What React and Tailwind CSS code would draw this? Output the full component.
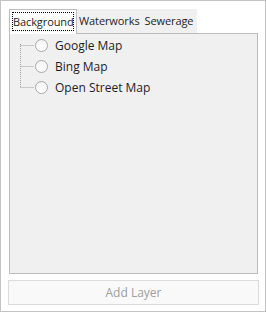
import React from 'react';

const layers = ['Google Map', 'Bing Map', 'Open Street Map'];

function Radio() {
  return (
    <span className="w-[13px] h-[13px] rounded-full border border-[#a8a8a8] bg-gradient-to-b from-[#f4f4f4] to-white shrink-0" />
  );
}

export default function App() {
  return (
    <div
      className="w-[266px] h-[312px] bg-white border border-[#c4c4c4] flex flex-col pl-[8px] pr-[7px] pt-[7px] text-[12px] text-[#1e1e1e]"
      style={{ fontFamily: '"Open Sans", "Liberation Sans", sans-serif' }}
    >
      {/* tab strip */}
      <div className="flex items-end h-[25px] text-[11px]">
        <div className="relative z-10 -mb-px h-[25px] w-[68px] bg-white border border-b-0 border-[#bcbcbc] flex items-start pt-[2px] pl-[2px]">
          <span className="border border-dotted border-black h-[19px] w-[62px] text-center leading-[17px] tracking-[-0.1px]">Background</span>
        </div>
        <div className="h-[24px] w-[120px] bg-[#f0f0f0] flex items-center pl-[2px] gap-[5px] tracking-[-0.1px]">
          <span>Waterworks</span>
          <span>Sewerage</span>
        </div>
      </div>

      {/* tab panel */}
      <div className="h-[241px] bg-[#f0f0f0] border border-[#bcbcbc] pt-[1px] pl-[10px]">
        <div className="relative flex flex-col">
          <svg className="absolute left-0 top-0" width="16" height="60">
            <path d="M0.5 9 V52.5 M0.5 10.5 H14 M0.5 31.5 H14 M0.5 52.5 H14" stroke="#a0a0a0" strokeDasharray="1 1" fill="none" />
          </svg>
          {layers.map((name) => (
            <div key={name} className="flex items-center h-[21px] pl-[15px] gap-[7px]">
              <Radio />
              <span className="leading-none">{name}</span>
            </div>
          ))}
        </div>
      </div>

      {/* button */}
      <button className="mt-[6px] -ml-px h-[25px] w-[251px] border border-[#dcdcdc] bg-[#f9f9f9] text-[#a0a0a0] text-[12px]">
        Add Layer
      </button>
    </div>
  );
}
